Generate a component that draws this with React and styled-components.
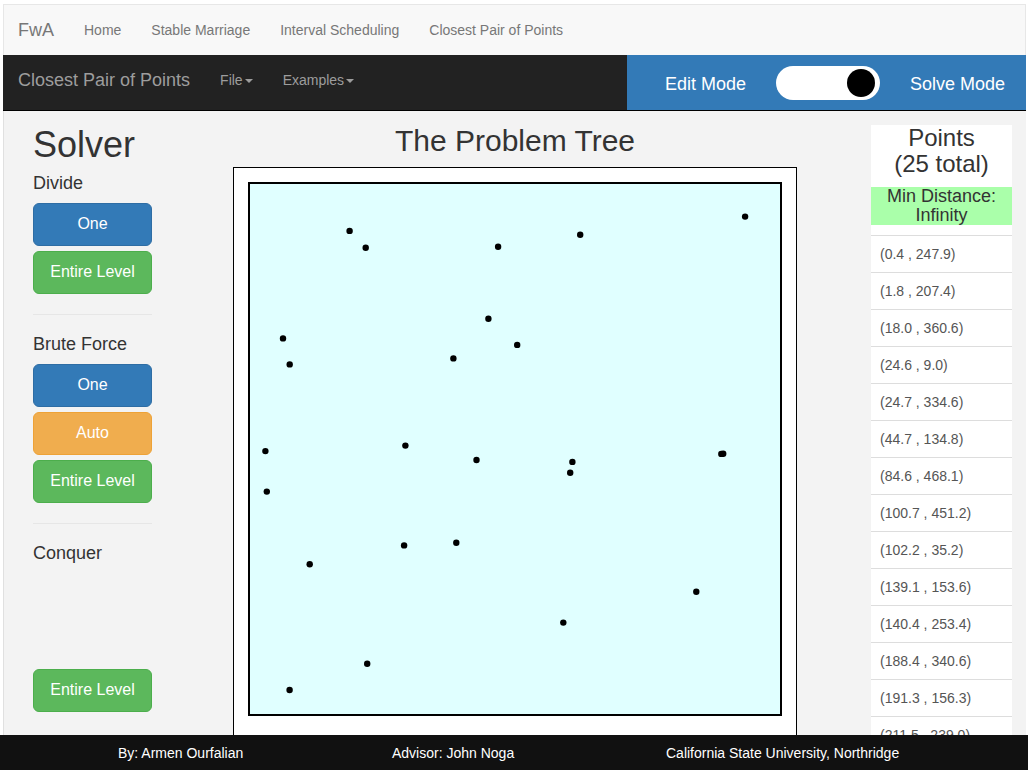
import styled, { createGlobalStyle } from "styled-components";

const GlobalStyle = createGlobalStyle`
  html, body {
    margin: 0;
    padding: 0;
    height: 100%;
    overflow: hidden;
    background: #fff;
    font-family: "Liberation Sans", Arial, Helvetica, sans-serif;
    color: #333;
  }
  * {
    box-sizing: border-box;
  }
`;

const points = [
  [0.4, 247.9],
  [1.8, 207.4],
  [18.0, 360.6],
  [24.6, 9.0],
  [24.7, 334.6],
  [44.7, 134.8],
  [84.6, 468.1],
  [100.7, 451.2],
  [102.2, 35.2],
  [139.1, 153.6],
  [140.4, 253.4],
  [188.4, 340.6],
  [191.3, 156.3],
  [211.5, 239.0],
  [223.4, 380.2],
  [233.1, 452.3],
  [252.2, 354.1],
  [298.3, 76.4],
  [305.2, 226.3],
  [307.4, 237.1],
  [315.2, 464.3],
  [431.3, 107.2],
  [456.3, 245.1],
  [458.2, 245.3],
  [480.1, 482.4],
];

const Page = styled.div`
  padding: 4px 2px 0 3px;
`;

const TopNav = styled.nav`
  height: 51px;
  background: #f8f8f8;
  border: 1px solid #e7e7e7;
  border-bottom: none;
  display: flex;
  align-items: center;
  padding-left: 14px;
`;

const Brand = styled.span`
  font-size: 18px;
  color: ${(p) => (p.dark ? "#9d9d9d" : "#777")};
  margin-right: 15px;
`;

const NavLink = styled.span`
  font-size: 14px;
  color: ${(p) => (p.dark ? "#9d9d9d" : "#777")};
  padding: 0 15px;
`;

const Caret = styled.span`
  display: inline-block;
  width: 0;
  height: 0;
  margin-left: 2px;
  vertical-align: middle;
  border-top: 4px solid;
  border-left: 4px solid transparent;
  border-right: 4px solid transparent;
`;

const AppNav = styled.nav`
  height: 56px;
  background: #222;
  border-bottom: 1px solid #000;
  display: flex;
  align-items: stretch;
`;

const AppNavLeft = styled.div`
  flex: 1;
  display: flex;
  align-items: center;
  padding: 0 0 5px 15px;
`;

const ModePanel = styled.div`
  width: 399px;
  background: #337ab7;
  display: flex;
  align-items: center;
  padding-left: 38px;
  gap: 30px;
`;

const ModeLabel = styled.span`
  color: #fff;
  font-size: 18px;
  padding-top: 3px;
`;

const Toggle = styled.div`
  width: 104px;
  height: 34px;
  border-radius: 17px;
  background: #fff;
  display: flex;
  align-items: center;
  justify-content: ${(p) => (p.on ? "flex-end" : "flex-start")};
  padding: 0 5px;
`;

const Knob = styled.div`
  width: 28px;
  height: 28px;
  border-radius: 50%;
  background: #000;
`;

const Main = styled.main`
  height: 624px;
  overflow: hidden;
  background: #f3f3f3;
  border-left: 1px solid #e0e0e0;
  display: flex;
  align-items: flex-start;
  padding-left: 29px;
`;

const Solver = styled.section`
  width: 119px;
  display: flex;
  flex-direction: column;
`;

const SolverTitle = styled.h1`
  font-size: 36px;
  font-weight: 400;
  line-height: 1.1;
  margin: 14px 0 8px;
`;

const StepLabel = styled.div`
  font-size: 18px;
  line-height: 20px;
  margin-bottom: 10px;
`;

const colors = {
  primary: ["#337ab7", "#2e6da4"],
  success: ["#5cb85c", "#4cae4c"],
  warning: ["#f0ad4e", "#eea236"],
};

const Button = styled.button`
  height: 43px;
  width: 100%;
  margin-bottom: 5px;
  border-radius: 6px;
  border: 1px solid ${(p) => colors[p.variant][1]};
  background: ${(p) => colors[p.variant][0]};
  color: #fff;
  font-family: inherit;
  font-size: 16px;
  padding: 0 0 1px;
  margin-top: ${(p) => p.offset || 0}px;
`;

const Rule = styled.hr`
  border: 0;
  border-top: 1px solid #e6e6e6;
  margin: 15px 0 19px;
  width: 100%;
`;

const Center = styled.section`
  width: 564px;
  margin-left: 81px;
  display: flex;
  flex-direction: column;
  align-items: center;
`;

const TreeTitle = styled.h2`
  font-size: 30px;
  font-weight: 400;
  line-height: 1.1;
  margin: 13px 0 10px;
  color: #333;
`;

const CanvasFrame = styled.div`
  width: 564px;
  background: #fff;
  border: 1px solid #000;
  padding: 14px 14px 40px;
`;

const Canvas = styled.svg`
  display: block;
  width: 534px;
  height: 534px;
  background: #e0ffff;
  border: 2px solid #000;
`;

const PointsPanel = styled.aside`
  width: 141px;
  margin-left: 74px;
  margin-top: 14px;
  background: #fff;
`;

const PointsTitle = styled.h3`
  margin: 0;
  font-size: 24px;
  font-weight: 400;
  line-height: 26px;
  text-align: center;
  color: #333;
`;

const MinDistance = styled.div`
  margin-top: 10px;
  background: #aaffaa;
  font-size: 18px;
  line-height: 19px;
  text-align: center;
  color: #333;
`;

const PointList = styled.ul`
  list-style: none;
  margin: 10px 0 0;
  padding: 0;
`;

const PointItem = styled.li`
  height: 37px;
  border-top: 1px solid #ddd;
  display: flex;
  align-items: center;
  padding-left: 9px;
  font-size: 14px;
  color: #555;
`;

const Footer = styled.footer`
  height: 35px;
  background: #111;
  margin-left: -3px;
  margin-right: -2px;
  display: flex;
  justify-content: center;
  align-items: center;
`;

const FooterRow = styled.div`
  width: 822px;
  display: grid;
  grid-template-columns: repeat(3, 1fr);
`;

const FooterCell = styled.div`
  padding: 0 15px;
  color: #fff;
  font-size: 14px;
`;

// canvas coordinates: x grows right, y grows up from the bottom edge
const toX = (v) => 15 + v;
const toY = (v) => 515 - v;

export default function App() {
  return (
    <Page>
      <GlobalStyle />
      <TopNav>
        <Brand>FwA</Brand>
        <NavLink>Home</NavLink>
        <NavLink>Stable Marriage</NavLink>
        <NavLink>Interval Scheduling</NavLink>
        <NavLink>Closest Pair of Points</NavLink>
      </TopNav>
      <AppNav>
        <AppNavLeft>
          <Brand dark>Closest Pair of Points</Brand>
          <NavLink dark>
            File<Caret />
          </NavLink>
          <NavLink dark>
            Examples<Caret />
          </NavLink>
        </AppNavLeft>
        <ModePanel>
          <ModeLabel>Edit Mode</ModeLabel>
          <Toggle on>
            <Knob />
          </Toggle>
          <ModeLabel>Solve Mode</ModeLabel>
        </ModePanel>
      </AppNav>
      <Main>
        <Solver>
          <SolverTitle>Solver</SolverTitle>
          <StepLabel>Divide</StepLabel>
          <Button variant="primary">One</Button>
          <Button variant="success">Entire Level</Button>
          <Rule />
          <StepLabel>Brute Force</StepLabel>
          <Button variant="primary">One</Button>
          <Button variant="warning">Auto</Button>
          <Button variant="success">Entire Level</Button>
          <Rule />
          <StepLabel>Conquer</StepLabel>
          <Button variant="success" offset={96}>
            Entire Level
          </Button>
        </Solver>
        <Center>
          <TreeTitle>The Problem Tree</TreeTitle>
          <CanvasFrame>
            <Canvas viewBox="0 0 530 530">
              {points.map(([x, y], i) => (
                <circle key={i} cx={toX(x)} cy={toY(y)} r="3.2" fill="#000" />
              ))}
            </Canvas>
          </CanvasFrame>
        </Center>
        <PointsPanel>
          <PointsTitle>
            Points
            <br />
            (25 total)
          </PointsTitle>
          <MinDistance>
            Min Distance:
            <br />
            Infinity
          </MinDistance>
          <PointList>
            {points.map(([x, y], i) => (
              <PointItem key={i}>
                ({x.toFixed(1)} , {y.toFixed(1)})
              </PointItem>
            ))}
          </PointList>
        </PointsPanel>
      </Main>
      <Footer>
        <FooterRow>
          <FooterCell>By: Armen Ourfalian</FooterCell>
          <FooterCell>Advisor: John Noga</FooterCell>
          <FooterCell>California State University, Northridge</FooterCell>
        </FooterRow>
      </Footer>
    </Page>
  );
}
